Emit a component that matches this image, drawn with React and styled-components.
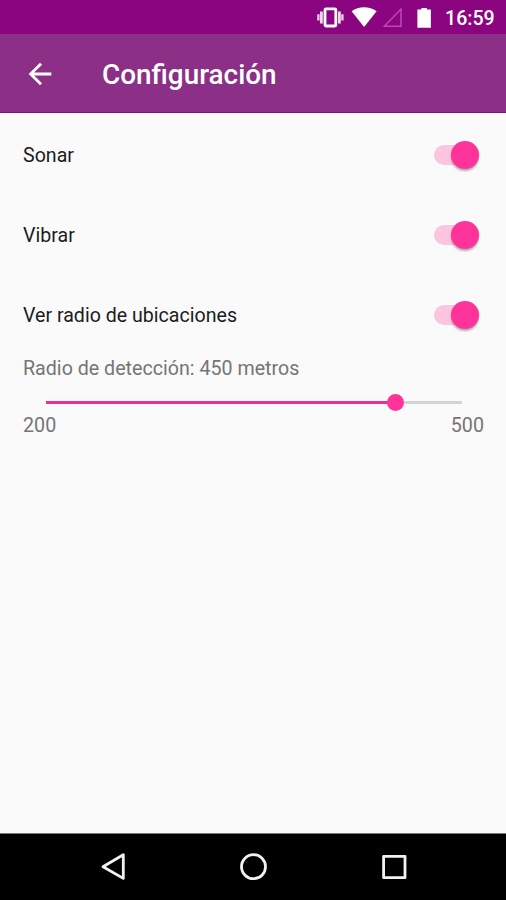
import React, { useState } from 'react'
import styled, { createGlobalStyle } from 'styled-components'

const GlobalStyle = createGlobalStyle`
  body {
    margin: 0;
    background: #fafafa;
    font-family: Roboto, "Noto Sans", sans-serif;
  }
`

const Screen = styled.div`
  display: flex;
  flex-direction: column;
  width: 506px;
  height: 900px;
  overflow: hidden;
  background: #fafafa;
`

const StatusBar = styled.div`
  display: flex;
  align-items: center;
  justify-content: flex-end;
  height: 34px;
  padding-right: 11px;
  background: #8b0581;
  color: #fff;
`

const StatusIcons = styled.svg`
  display: block;
  width: 118px;
  height: 34px;
  margin-right: 11px;
`

const Clock = styled.span`
  width: 50px;
  padding-top: 2px;
  font-size: 19.6px;
  font-weight: 500;
  white-space: nowrap;
`

const AppBar = styled.header`
  box-sizing: border-box;
  display: flex;
  align-items: center;
  height: 79px;
  padding-left: 23px;
  background: #8b2f87;
  border-bottom: 1px solid #7a1675;
  color: #fff;
`

const BackButton = styled.button`
  display: flex;
  width: 34px;
  height: 34px;
  margin: 1px 45px 0 0;
  padding: 0;
  border: 0;
  background: none;
  color: inherit;
`

const Title = styled.h1`
  margin: 4px 0 0;
  font-size: 27.9px;
  font-weight: 500;
  line-height: 34px;
`

const Content = styled.main`
  flex: 1;
  padding: 2px 22px 0 23px;
`

const Row = styled.div`
  display: flex;
  align-items: center;
  justify-content: space-between;
  height: 80px;
  padding-right: 5px;
  color: #1c1c1c;
  font-size: 19.6px;
`

const Label = styled.span`
  padding-top: 1px;
`

const Track = styled.button`
  display: flex;
  align-items: center;
  justify-content: ${({ $on }) => ($on ? 'flex-end' : 'flex-start')};
  width: 45px;
  height: 20px;
  margin-bottom: 1px;
  padding: 0;
  border: 0;
  border-radius: 10px;
  background: ${({ $on }) => ($on ? '#fbc5e0' : '#b8b8b8')};
`

const Thumb = styled.span`
  flex: none;
  width: 28px;
  height: 28px;
  border-radius: 50%;
  background: ${({ $on }) => ($on ? '#ff3399' : '#f1f1f1')};
  box-shadow: 0 2px 2px rgba(0,0,0,0.3);
`

const RadiusLabel = styled.div`
  margin-top: 2px;
  color: #757575;
  font-size: 19.65px;
  line-height: 24px;
`

const Slider = styled.div`
  display: flex;
  align-items: center;
  height: 17px;
  margin: 13px 22px 0 23px;
`

const SliderFill = styled.div`
  height: 3px;
  background: #ee2f91;
`

const SliderKnob = styled.div`
  flex: none;
  width: 17px;
  height: 17px;
  margin: 0 -8.5px;
  border-radius: 50%;
  background: #ff3399;
  z-index: 1;
`

const SliderRest = styled.div`
  flex: 1;
  height: 3px;
  background: #d4d4d4;
`

const Limits = styled.div`
  display: flex;
  justify-content: space-between;
  margin-top: 3px;
  color: #757575;
  font-size: 19.7px;
  line-height: 24px;
`

const NavBar = styled.nav`
  box-sizing: border-box;
  height: 67px;
  border-top: 1px solid #777;
  background: #000;
`

const Switch = ({ label, on, onChange }) => {
    return (
        <Row>
            <Label>{label}</Label>
            <Track $on={on} role="switch" aria-checked={on} aria-label={label} onClick={onChange}>
                <Thumb $on={on}/>
            </Track>
        </Row>
    )
}

const options = ['Sonar', 'Vibrar', 'Ver radio de ubicaciones']

export default function App() {
    const [enabled, setEnabled] = useState([true, true, true])
    // position of the knob along the track, in percent
    const [progress] = useState(84)

    const toggle = (index) => setEnabled(enabled.map((on, i) => (i === index ? !on : on)))

    return (
        <Screen>
            <GlobalStyle/>
            <StatusBar>
                <StatusIcons viewBox="316 0 118 34">
                    <g fill="none" stroke="#fff">
                        <rect x="325" y="8.8" width="10.8" height="17.2" rx="1" strokeWidth="2.8"/>
                        <path d="M321.4 11.5v12M339.4 11.5v12" strokeWidth="2.8" opacity=".85"/>
                        <path d="M318.4 14.2v6.4M342.4 14.2v6.4" strokeWidth="2.4" opacity=".8"/>
                    </g>
                    <path d="M351.6 11.2c7-5.2 18-5.2 25 0L364.1 27z" fill="#fff"/>
                    <path d="M401 9v17.3h-16.6z" fill="none" stroke="#b24fab" strokeWidth="1.5"/>
                    <path d="M417.4 9.4h4V8h5.4v1.4h4.1v18.4h-13.5z" fill="#fff"/>
                </StatusIcons>
                <Clock>16:59</Clock>
            </StatusBar>
            <AppBar>
                <BackButton aria-label="Atrás">
                    <svg width="34" height="34" viewBox="0 0 24 24" fill="currentColor">
                        <path d="M20 11H7.83l5.59-5.59L12 4l-8 8 8 8 1.41-1.41L7.83 13H20z"/>
                    </svg>
                </BackButton>
                <Title>Configuración</Title>
            </AppBar>
            <Content>
                {options.map((label, i) => (
                    <Switch key={label} label={label} on={enabled[i]} onChange={() => toggle(i)}/>
                ))}
                <RadiusLabel>Radio de detección: 450 metros</RadiusLabel>
                <Slider>
                    <SliderFill style={{ width: `${progress}%` }}/>
                    <SliderKnob/>
                    <SliderRest/>
                </Slider>
                <Limits>
                    <span>200</span>
                    <span>500</span>
                </Limits>
            </Content>
            <NavBar>
                <svg width="506" height="66" viewBox="0 834 506 66" fill="none" stroke="#f2f2f2" strokeWidth="2.8" strokeLinejoin="round">
                    <path d="M123.3 854.8v23.6L103 866.7z"/>
                    <circle cx="253.5" cy="866.7" r="12"/>
                    <rect x="383.6" y="856.3" width="21.4" height="21.4"/>
                </svg>
            </NavBar>
        </Screen>
    )
}
